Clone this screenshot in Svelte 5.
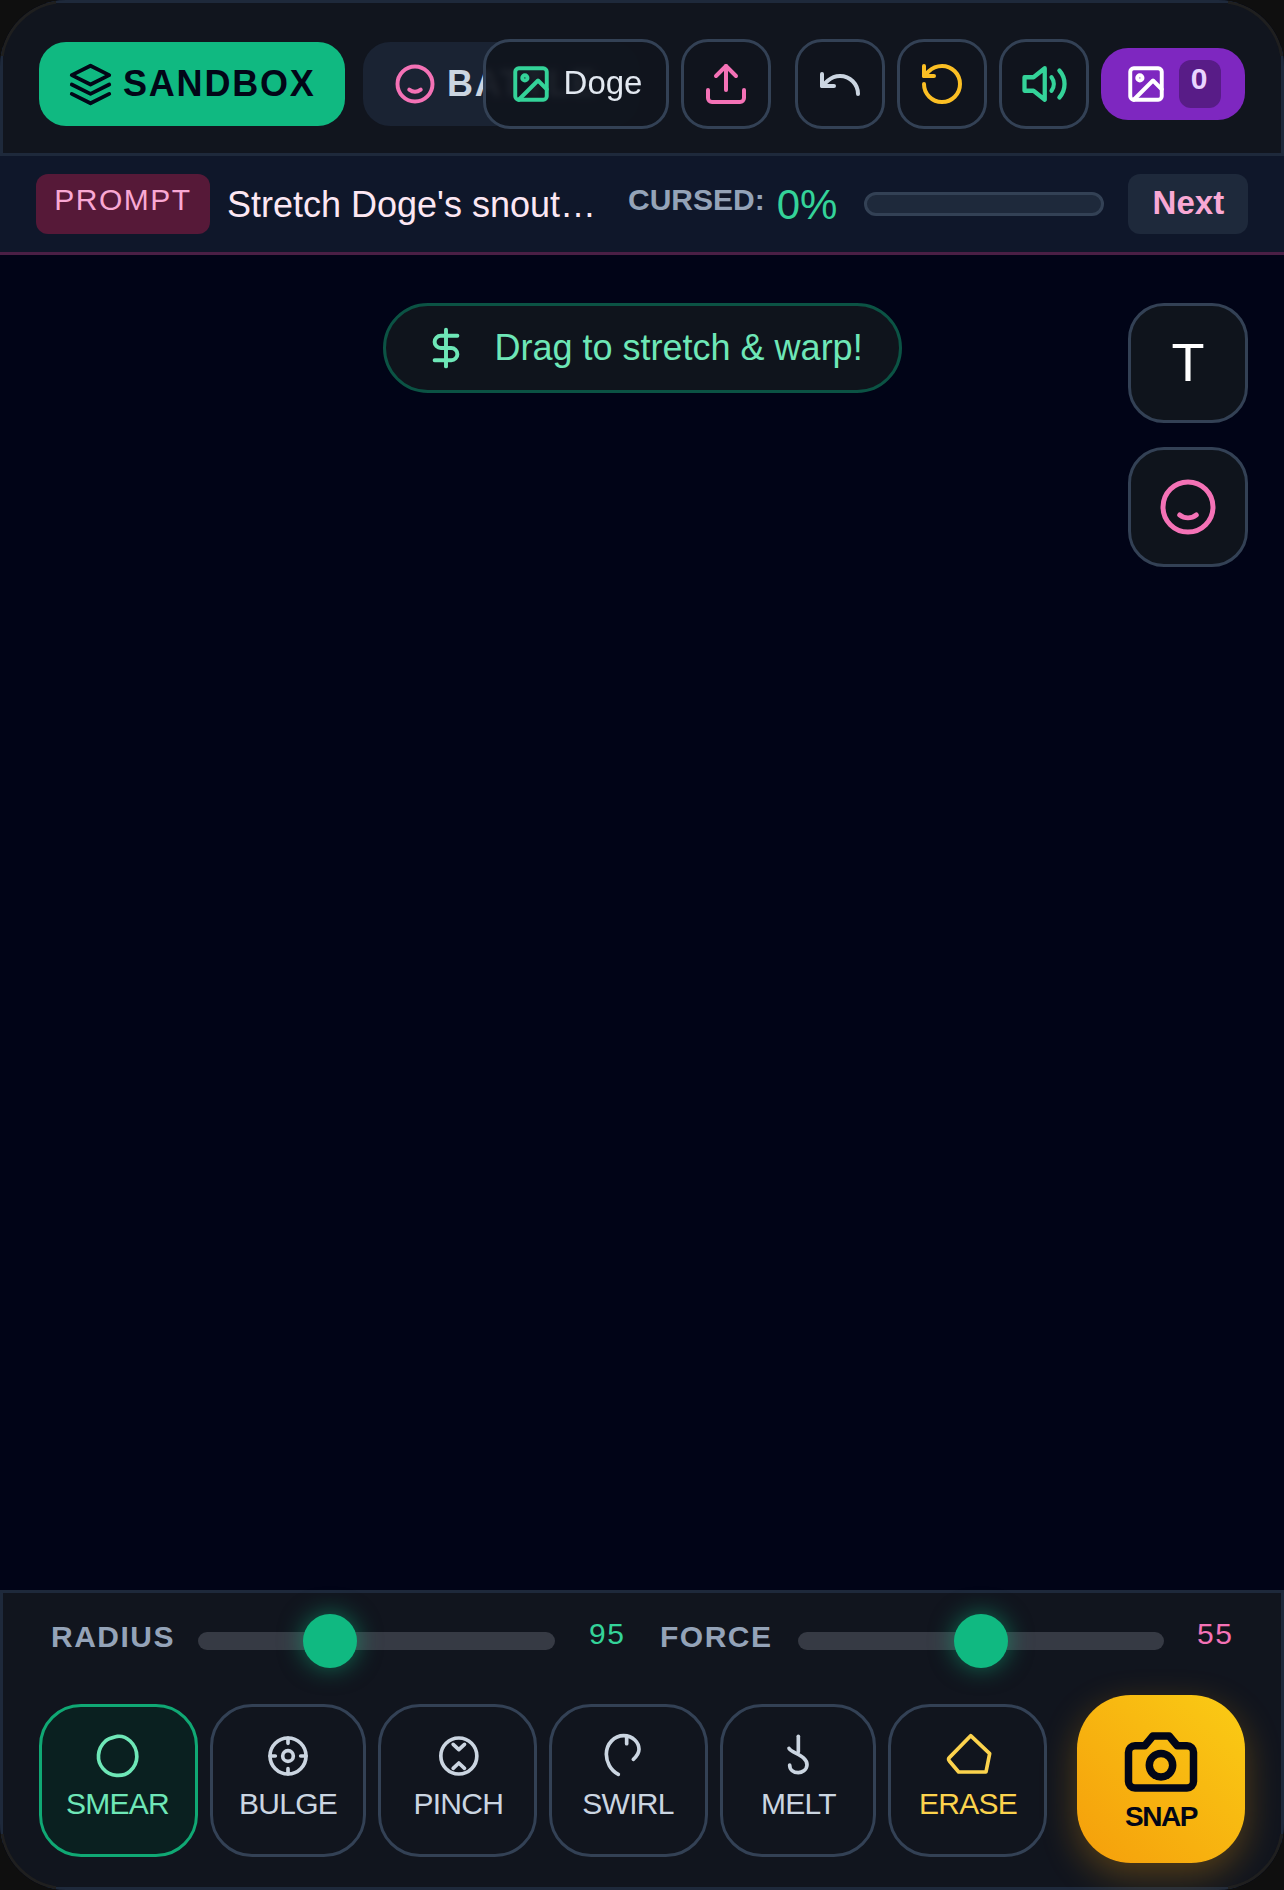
<script>
  const tools = [
    { label: 'SMEAR', cls: 'active nudge-l', vb: '232.5 132 126 126', body: 'smear' },
    { label: 'BULGE', cls: '', vb: '741 132 126 126', body: 'bulge' },
    { label: 'PINCH', cls: 'nudge-r', vb: '198.5 132 126 126', body: 'pinch' },
    { label: 'SWIRL', cls: '', vb: '712 132 126 126', body: 'swirl' },
    { label: 'MELT', cls: 'nudge-r', vb: '170 132 126 126', body: 'melt' },
    { label: 'ERASE', cls: 'warn nudge-r', vb: '678 132 126 126', body: 'erase' }
  ];
</script>

{#snippet imageIcon()}
  <svg class="ic42" viewBox="0 0 24 24"><rect x="3" y="3" width="18" height="18" rx="2" /><circle cx="8.5" cy="8.5" r="1.5" /><path d="M21 15l-5-5L5 21" /></svg>
{/snippet}
{#snippet smile()}
  <circle cx="12" cy="12" r="10" /><path d="M8.7 15.2c2 1.5 4.6 1.5 6.6 0" />
{/snippet}

<div class="frame">
  <header class="top">
    <div class="modes">
      <button class="mode sandbox">
        <svg class="ic45" viewBox="0 0 24 24"><path d="M12 2 22 7 12 12 2 7z" /><path d="M2 17l10 5 10-5" /><path d="M2 12l10 5 10-5" /></svg>
        <span>SANDBOX</span>
      </button>
      <button class="mode battle">
        <svg class="ic42 pink" viewBox="0 0 24 24">{@render smile()}</svg>
        <span>BATTLE</span>
      </button>
    </div>
    <div class="actions">
      <button class="sq doge">
        <span class="green">{@render imageIcon()}</span>
        <span class="dogetxt">Doge</span>
      </button>
      <button class="sq ico pink">
        <svg class="ic48" viewBox="0 0 24 24"><path d="M12 3v12" /><path d="M17 8l-5-5-5 5" /><path d="M21 15v4a2 2 0 0 1-2 2H5a2 2 0 0 1-2-2v-4" /></svg>
      </button>
      <button class="sq ico gapl slate">
        <svg class="ic48" viewBox="0 0 24 24"><path d="M3 7v6h6" /><path d="M21 17a9 9 0 0 0-9-9 9 9 0 0 0-6 2.3L3 13" /></svg>
      </button>
      <button class="sq ico amber">
        <svg class="ic48" viewBox="0 0 24 24"><path d="M3 12a9 9 0 1 0 9-9 9.75 9.75 0 0 0-6.74 2.74L3 8" /><path d="M3 3v5h5" /></svg>
      </button>
      <button class="sq ico green">
        <svg class="ic54" viewBox="0 0 24 24"><path d="M11 5 6 9H2v6h4l5 4V5z" /><path d="M14 9a5 5 0 0 1 0 6" /><path d="M17.5 6a9 9 0 0 1 0 12" /></svg>
      </button>
      <button class="gallery">
        {@render imageIcon()}
        <span class="count">0</span>
      </button>
    </div>
  </header>

  <section class="prompt">
    <span class="tag">PROMPT</span>
    <span class="ptext">Stretch Doge's snout and make him look wild</span>
    <span class="cursed">CURSED:</span>
    <span class="pct">0%</span>
    <span class="bar"></span>
    <button class="next">Next</button>
  </section>

  <main class="canvas">
    <div class="hint">
      <svg class="ic42" viewBox="0 0 24 24"><path d="M12 1.5v21" /><path d="M18.5 5H9a3.5 3.5 0 0 0 0 7h6a3.5 3.5 0 0 1 0 7H5.5" /></svg>
      <span>Drag to stretch &amp; warp!</span>
    </div>
    <div class="side">
      <button class="big t">T</button>
      <button class="big pink">
        <svg class="ic60" viewBox="0 0 24 24">{@render smile()}</svg>
      </button>
    </div>
  </main>

  <footer class="panel">
    <div class="sliders">
      <div class="slider first">
        <span class="slabel">RADIUS</span>
        <div class="track r"><span class="thumb"></span></div>
        <span class="val green">95</span>
      </div>
      <div class="slider second">
        <span class="slabel">FORCE</span>
        <div class="track f"><span class="thumb"></span></div>
        <span class="val pinkv">55</span>
      </div>
    </div>
    <div class="toolrow">
      <div class="tools">
        {#each tools as t}
          <button class="tool {t.cls}">
            <svg class="ic42 raw" viewBox={t.vb}>
              {#if t.body === 'smear'}
                <path d="M291 136c10-1 26 3 38 14 14 13 20 30 20 47 0 18-9 33-21 44-11 10-27 13-40 12-16-1-30-8-41-21-10-12-14-27-13-40 1-16 9-31 21-42 10-8 21-10 36-14z" />
              {:else if t.body === 'bulge'}
                <circle cx="804" cy="195" r="54" /><circle cx="804" cy="195" r="16" />
                <path d="M804 141v16M804 233v16M750 195h16M842 195h16" />
              {:else if t.body === 'pinch'}
                <circle cx="267" cy="195" r="54" />
                <path d="M250 160l17 16 17-16M250 232l17-16 17 16" />
              {:else if t.body === 'swirl'}
                <path d="M746 250C722 238 710 212 710 190 710 157 735 134 762 134 790 134 808 155 808 175 808 188 800 197 791 205" />
                <path d="M771 136v22" />
              {:else if t.body === 'melt'}
                <path d="M234 136v46" />
                <path d="M206 172C214 186 261 194 260 222 259 238 244 245 234 245 219 245 208 236 208 222" />
              {:else if t.body === 'erase'}
                <path d="M752 134 809 188 798 243H716L688 210C685 206 685 203 688 200z" />
              {/if}
            </svg>
            <span>{t.label}</span>
          </button>
        {/each}
      </div>
      <button class="snap">
        <svg class="ic78" viewBox="0 0 24 24"><path d="M14.5 4h-5L7 7H4a2 2 0 0 0-2 2v9a2 2 0 0 0 2 2h16a2 2 0 0 0 2-2V9a2 2 0 0 0-2-2h-3l-2.5-3z" /><circle cx="12" cy="13" r="3.6" /></svg>
        <span>SNAP</span>
      </button>
    </div>
  </footer>
</div>

<style>
  :global(body) { margin: 0; background: #0f0f0f; }
  * { box-sizing: border-box; }
  button { font-family: inherit; margin: 0; padding: 0; cursor: pointer; }
  svg { fill: none; stroke: currentColor; stroke-width: 2; stroke-linecap: round; stroke-linejoin: round; display: block; flex: none; overflow: visible; }
  svg.raw { stroke-width: 11; }
  .ic42 { width: 42px; height: 42px; stroke-width: 2.25; }
  .ic45 { width: 45px; height: 45px; }
  .ic48 { width: 48px; height: 48px; }
  .ic54 { width: 54px; height: 54px; stroke-width: 1.9; margin-left: 6px; }
  .ic60 { width: 60px; height: 60px; }
  .ic78 { width: 78px; height: 78px; stroke-width: 2.3; }
  .pink { color: #f472b6; }
  .green { color: #34d399; }
  .amber { color: #fbbf24; }
  .slate { color: #cbd5e1; }

  .frame {
    width: 1284px; height: 1890px; border-radius: 66px; overflow: hidden; position: relative;
    background: #010417; display: flex; flex-direction: column;
    font-family: "Liberation Sans", Arial, sans-serif; color: #e2e8f0;
  }
  .frame::after {
    content: ""; position: absolute; inset: 0; border-radius: 66px; border: 3px solid #1f1f1f; pointer-events: none;
    -webkit-mask:
      linear-gradient(#000 0 0) top left / 56px 56px no-repeat,
      linear-gradient(#000 0 0) top right / 56px 56px no-repeat,
      linear-gradient(#000 0 0) bottom left / 56px 56px no-repeat,
      linear-gradient(#000 0 0) bottom right / 56px 56px no-repeat;
    mask:
      linear-gradient(#000 0 0) top left / 56px 56px no-repeat,
      linear-gradient(#000 0 0) top right / 56px 56px no-repeat,
      linear-gradient(#000 0 0) bottom left / 56px 56px no-repeat,
      linear-gradient(#000 0 0) bottom right / 56px 56px no-repeat;
  }

  .top {
    height: 156px; flex: none; background: #11151e; border: 3px solid #1e293b;
    position: relative; display: flex; align-items: center; padding: 12px 36px 0;
  }
  .modes { display: flex; gap: 18px; }
  .mode {
    height: 84px; border: 0; border-radius: 27px; display: flex; align-items: center;
    font-size: 36px; font-weight: 700; letter-spacing: 1.8px;
  }
  .sandbox { width: 306px; background: #10b981; color: #020617; padding-left: 29px; gap: 10px; }
  .battle { width: 276px; background: #1a2333; color: #cbd5e1; padding-left: 31px; gap: 11px; }
  .actions { position: absolute; left: 480px; top: 36px; right: 35px; display: flex; align-items: center; gap: 12px; }
  .sq {
    height: 90px; border-radius: 27px; border: 3px solid #334155; background: rgba(16, 20, 29, 0.93);
    backdrop-filter: blur(3px); display: flex; align-items: center; justify-content: center;
  }
  .ico { width: 90px; }
  .gapl { margin-left: 12px; }
  .doge { width: 186px; gap: 12px; color: #e2e8f0; font-size: 33px; }
  .dogetxt { margin-bottom: 3px; }
  .gallery {
    margin-left: 0; width: 144px; height: 72px; border: 0; border-radius: 27px; background: #7e27c0; color: #fff;
    display: flex; align-items: center; padding-left: 24px; gap: 12px;
  }
  .gallery svg { color: #fff; }
  .count {
    width: 42px; height: 48px; border-radius: 12px; background: #581c87; color: #e9d5ff;
    font-size: 30px; font-weight: 700; line-height: 38px; text-align: center; padding-right: 2px;
  }

  .prompt {
    height: 99px; flex: none; background: #0f172a; border-bottom: 3px solid #4a1f45;
    display: flex; align-items: center; padding: 0 36px;
  }
  .tag {
    width: 174px; height: 60px; border-radius: 12px; background: #561938; color: #f9a8d4;
    font-size: 30px; letter-spacing: 1.5px; line-height: 52px; text-align: center; flex: none;
  }
  .ptext {
    width: 372px; margin-left: 17px; font-size: 36px; color: #fce7f3; white-space: nowrap; overflow: hidden;
    text-overflow: ellipsis; flex: none; position: relative; top: 1px;
  }
  .cursed { margin-left: 29px; font-size: 30px; font-weight: 700; color: #94a3b8; position: relative; top: -4px; flex: none; }
  .pct { margin-left: 12px; font-size: 42px; color: #34d399; flex: none; position: relative; top: 1px; }
  .bar { margin-left: 27px; width: 240px; height: 24px; border-radius: 12px; background: #1e293b; border: 3px solid #334155; flex: none; }
  .next {
    margin-left: 24px; width: 120px; height: 60px; border: 0; border-radius: 12px; background: #1e293b; color: #f9a8d4;
    font-size: 33px; font-weight: 700; flex: none; padding-bottom: 2px;
  }

  .canvas { flex: 1; min-height: 0; position: relative; }
  .hint {
    position: absolute; left: 383px; top: 48px; width: 519px; height: 90px; border-radius: 45px;
    border: 3px solid #0b5344; background: #0f141c; color: #6ee7b7;
    display: flex; align-items: center; padding-left: 39px; gap: 27.5px; font-size: 36px;
  }
  .side { position: absolute; left: 1128px; top: 48px; display: flex; flex-direction: column; gap: 24px; }
  .big {
    width: 120px; height: 120px; border-radius: 36px; border: 3px solid #334155; background: #0f141c;
    display: flex; align-items: center; justify-content: center;
  }
  .t { color: #fff; font-size: 54px; padding-bottom: 3px; }

  .panel {
    height: 300px; flex: none; background: #11151e; border: 3px solid #1e293b; padding: 0 36px;
    display: flex; flex-direction: column;
  }
  .sliders { height: 102px; flex: none; display: flex; position: relative; }
  .slider { position: absolute; top: 0; height: 96px; display: flex; align-items: center; }
  .first { left: 12px; }
  .second { left: 621px; }
  .slabel { font-size: 30px; font-weight: 700; color: #94a3b8; letter-spacing: 1.5px; position: relative; top: -4px; }
  .first .slabel { width: 147px; }
  .second .slabel { width: 138px; }
  .track { height: 18px; border-radius: 9px; background: #363a44; position: relative; }
  .r { width: 357px; }
  .f { width: 366px; }
  .thumb {
    position: absolute; width: 54px; height: 54px; border-radius: 50%; top: -18px; background: #10b981;
    box-shadow: 0 0 24px rgba(16, 185, 129, 0.55);
  }
  .r .thumb { left: 105px; }
  .f .thumb { left: 156px; }
  .val { font-size: 30px; letter-spacing: 1.5px; position: relative; top: -7px; }
  .first .val { margin-left: 34px; }
  .second .val { margin-left: 33px; }
  .pinkv { color: #f472b6; }

  .toolrow { display: flex; align-items: center; height: 168px; flex: none; justify-content: space-between; }
  .tools { display: grid; grid-template-columns: 159px 156px 158.5px 159px 156px 159px; gap: 12px; margin-top: 3px; }
  .tool {
    height: 153px; border-radius: 42px; border: 3px solid #334155; background: #11151e; color: #cbd5e1;
    display: flex; flex-direction: column; align-items: center; padding-top: 28px; gap: 10px;
    font-size: 30px; letter-spacing: -0.75px;
  }
  .tool.active { border-color: #10a874; background: #0a2020; color: #6ee7b7; }
  .tool.warn { color: #fcd34d; }
  .nudge-r span { margin-left: 2px; }
  .nudge-l span { margin-right: 2px; }
  .snap {
    width: 168px; height: 168px; border: 0; border-radius: 54px; color: #020617;
    background: linear-gradient(45deg, #f59e0b, #facc15);
    box-shadow: 0 12px 36px rgba(245, 158, 11, 0.3);
    display: flex; flex-direction: column; align-items: center; justify-content: center;
    font-size: 28px; font-weight: 700; letter-spacing: -1.4px;
  }
  .snap svg { margin-top: -2px; }
</style>
